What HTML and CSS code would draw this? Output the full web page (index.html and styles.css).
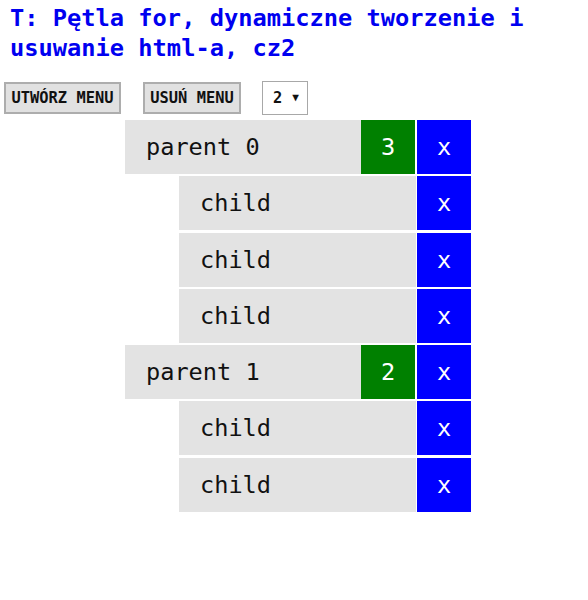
FILE: index.html
```html
<!DOCTYPE html>
<html lang="pl">
<head>
<meta charset="utf-8">
<title>Pętla for</title>
<link rel="stylesheet" href="styles.css">
</head>
<body>
<h1 class="title">T: Pętla for, dynamiczne tworzenie i usuwanie html-a, cz2</h1>
<div class="controls">
  <button class="btn btn-create">UTWÓRZ MENU</button>
  <button class="btn btn-remove">USUŃ MENU</button>
  <div class="select"><span class="select-value">2</span><span class="select-arrow">▼</span></div>
</div>
<div class="menu">
  <div class="row parent">
    <div class="label">parent 0</div>
    <div class="count">3</div>
    <div class="del">x</div>
  </div>
  <div class="row child">
    <div class="label">child</div>
    <div class="del">x</div>
  </div>
  <div class="row child">
    <div class="label">child</div>
    <div class="del">x</div>
  </div>
  <div class="row child">
    <div class="label">child</div>
    <div class="del">x</div>
  </div>
  <div class="row parent">
    <div class="label">parent 1</div>
    <div class="count">2</div>
    <div class="del">x</div>
  </div>
  <div class="row child">
    <div class="label">child</div>
    <div class="del">x</div>
  </div>
  <div class="row child">
    <div class="label">child</div>
    <div class="del">x</div>
  </div>
</div>
</body>
</html>
```

FILE: styles.css
```css
html, body {
  margin: 0;
  padding: 0;
  background: #ffffff;
}

body {
  font-family: "DejaVu Sans Mono", "Liberation Mono", monospace;
  color: #111111;
}

.title {
  margin: 0;
  padding: 4px 10px 0 10px;
  font-size: 23.7px;
  line-height: 29.5px;
  font-weight: bold;
  color: #0000f0;
}

.controls {
  display: flex;
  align-items: center;
  padding-left: 4px;
  margin-top: 17px;
  height: 35px;
}

.btn {
  font-family: "DejaVu Sans Mono", "Liberation Mono", monospace;
  font-weight: bold;
  font-size: 15.4px;
  color: #111111;
  background: #e1e1e1;
  border: 2px solid #adadad;
  height: 32px;
  padding: 0;
  margin: 0;
  text-align: center;
}

.btn-create {
  width: 117px;
}

.btn-remove {
  width: 98px;
  margin-left: 22px;
}

.select {
  margin-left: 21px;
  width: 44px;
  height: 32px;
  border: 1px solid #a8a8a8;
  background: #ffffff;
  display: flex;
  align-items: center;
  box-sizing: content-box;
}

.select-value {
  font-weight: bold;
  font-size: 15.4px;
  margin-left: 10px;
}

.select-arrow {
  font-size: 11px;
  margin-left: 10px;
  color: #111111;
}

.menu {
  margin-left: 125px;
  margin-top: 5px;
  width: 346px;
}

.row {
  display: flex;
  height: 54px;
  margin-top: 2.3px;
  font-size: 23.6px;
  line-height: 54px;
}

.row:first-child {
  margin-top: 0;
}

.label {
  flex: 1;
  background: #e3e3e3;
  padding-left: 21px;
}

.child {
  margin-left: 54px;
}

.count {
  width: 54px;
  background: #008000;
  color: #ffffff;
  text-align: center;
}

.del {
  width: 54px;
  background: #0000ff;
  color: #ffffff;
  text-align: center;
}

.parent .del {
  margin-left: 2px;
}

.child .del {
  margin-left: 1px;
}
```
